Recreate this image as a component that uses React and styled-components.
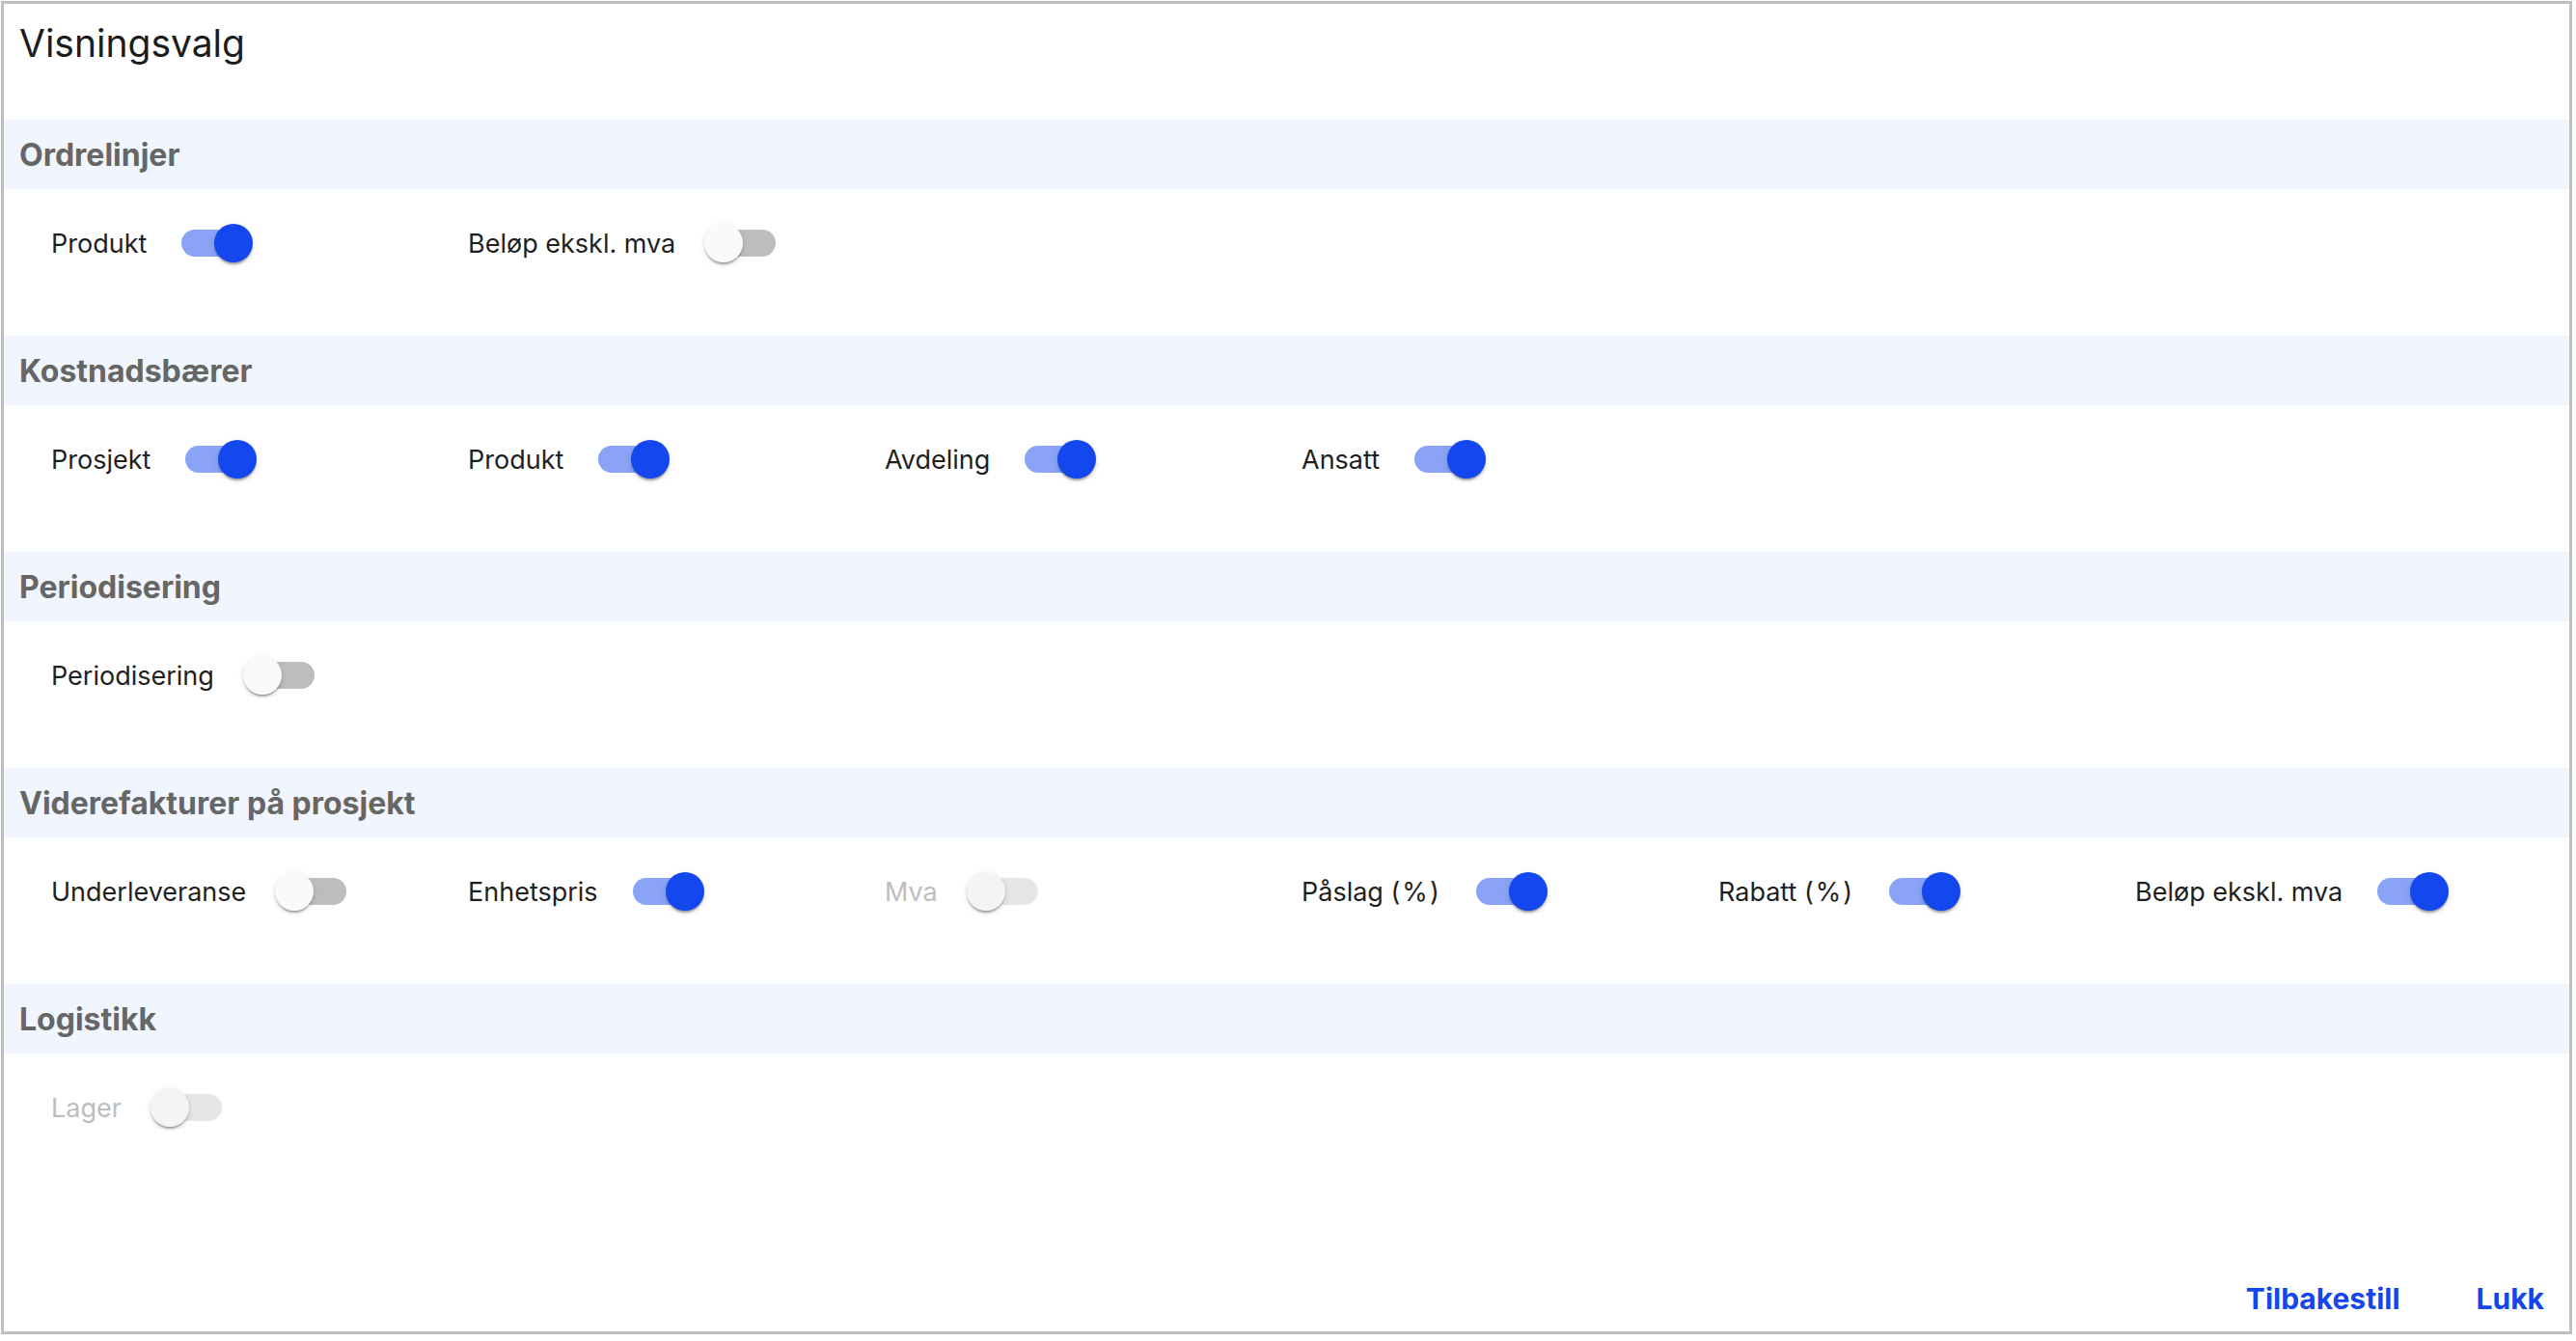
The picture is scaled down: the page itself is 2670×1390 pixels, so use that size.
import React, { useState } from "react";
import styled, { createGlobalStyle } from "styled-components";

const GlobalStyle = createGlobalStyle`
  html, body {
    margin: 0;
    padding: 0;
    background: #ffffff;
  }
  body {
    font-family: Inter, "Noto Sans", "Liberation Sans", sans-serif;
  }
`;

const Dialog = styled.div`
  width: 2665px;
  height: 1382px;
  margin: 1px 0 0 1px;
  box-sizing: border-box;
  border: 3px solid #bfbfbf;
  background: #ffffff;
  display: flex;
  flex-direction: column;
`;

const Title = styled.h2`
  margin: 0;
  height: 120px;
  box-sizing: border-box;
  padding: 18px 0 0 16px;
  font-size: 39px;
  font-weight: 400;
  line-height: 46px;
  color: #1c1c1c;
`;

const Band = styled.div`
  height: 72px;
  box-sizing: border-box;
  padding-left: 16px;
  display: flex;
  align-items: center;
  background-color: #f1f5fe;
`;

const SectionTitle = styled.h3`
  margin: 0;
  font-size: 32px;
  font-weight: 650;
  color: #666666;
`;

const Options = styled.div`
  height: ${(p) => (p.$grow ? "auto" : "152px")};
  flex: ${(p) => (p.$grow ? 1 : "none")};
  box-sizing: border-box;
  padding: 36px 0 0 49px;
  display: grid;
  grid-template-columns: repeat(6, 432px);
  align-content: start;
`;

const Option = styled.label`
  display: flex;
  align-items: center;
  height: 40px;
  cursor: ${(p) => (p.$disabled ? "default" : "pointer")};
`;

const Label = styled.span`
  font-size: 27px;
  color: ${(p) => (p.$disabled ? "#bdbdbd" : "#1f1f1f")};
  margin-right: 30px;
  white-space: nowrap;
`;

const Paren = styled.span`
  letter-spacing: 2px;
`;

const SwitchRoot = styled.span`
  position: relative;
  display: inline-block;
  width: 80px;
  height: 40px;
  flex: none;
`;

const Track = styled.span`
  position: absolute;
  left: 6px;
  right: 6px;
  top: 6px;
  height: 28px;
  border-radius: 14px;
  background-color: ${(p) =>
    p.$disabled ? "#e6e6e6" : p.$on ? "#8aa3f6" : "#bdbdbd"};
`;

const Thumb = styled.span`
  position: absolute;
  top: 0;
  left: ${(p) => (p.$on ? "40px" : "0")};
  width: 40px;
  height: 40px;
  border-radius: 50%;
  background-color: ${(p) =>
    p.$disabled ? "#f4f4f4" : p.$on ? "#1447ed" : "#fafafa"};
  box-shadow: 0 4px 2px -2px rgba(0, 0, 0, 0.2),
    0 2px 2px 0 rgba(0, 0, 0, 0.14), 0 2px 6px 0 rgba(0, 0, 0, 0.12);
  transition: left 150ms ease;
`;

const Footer = styled.div`
  height: 68px;
  display: flex;
  align-items: center;
  justify-content: flex-end;
  gap: 79px;
  padding-right: 26px;
`;

const TextButton = styled.button`
  border: none;
  background: none;
  padding: 0;
  font-family: inherit;
  font-size: 30px;
  font-weight: 700;
  color: #1446ec;
  cursor: pointer;
`;

const initialSections = [
  {
    title: "Ordrelinjer",
    options: [
      { id: "ol-produkt", label: "Produkt", on: true },
      { id: "ol-belop", label: "Beløp ekskl. mva", on: false },
    ],
  },
  {
    title: "Kostnadsbærer",
    options: [
      { id: "kb-prosjekt", label: "Prosjekt", on: true },
      { id: "kb-produkt", label: "Produkt", on: true },
      { id: "kb-avdeling", label: "Avdeling", on: true },
      { id: "kb-ansatt", label: "Ansatt", on: true },
    ],
  },
  {
    title: "Periodisering",
    options: [{ id: "pe-periodisering", label: "Periodisering", on: false }],
  },
  {
    title: "Viderefakturer på prosjekt",
    options: [
      { id: "vf-underleveranse", label: "Underleveranse", on: false },
      { id: "vf-enhetspris", label: "Enhetspris", on: true },
      { id: "vf-mva", label: "Mva", on: false, disabled: true },
      { id: "vf-paslag", label: "Påslag", unit: "(%)", on: true },
      { id: "vf-rabatt", label: "Rabatt", unit: "(%)", on: true },
      { id: "vf-belop", label: "Beløp ekskl. mva", on: true },
    ],
  },
  {
    title: "Logistikk",
    options: [{ id: "lo-lager", label: "Lager", on: false, disabled: true }],
  },
];

const defaults = () => {
  const values = {};
  initialSections.forEach((s) => s.options.forEach((o) => (values[o.id] = o.on)));
  return values;
};

const Switch = ({ on, disabled }) => (
  <SwitchRoot>
    <Track $on={on} $disabled={disabled} />
    <Thumb $on={on} $disabled={disabled} />
  </SwitchRoot>
);

const App = () => {
  const [values, setValues] = useState(defaults);

  const toggle = (option) => {
    if (option.disabled) return;
    setValues((v) => ({ ...v, [option.id]: !v[option.id] }));
  };

  return (
    <>
      <GlobalStyle />
      <Dialog>
        <Title>Visningsvalg</Title>
        {initialSections.map((section, i) => (
          <React.Fragment key={section.title}>
            <Band>
              <SectionTitle>{section.title}</SectionTitle>
            </Band>
            <Options $grow={i === initialSections.length - 1}>
              {section.options.map((option) => (
                <Option
                  key={option.id}
                  $disabled={option.disabled}
                  onClick={() => toggle(option)}
                >
                  <Label $disabled={option.disabled}>
                    {option.label}
                    {option.unit && (
                      <>
                        {" "}
                        <Paren>{option.unit}</Paren>
                      </>
                    )}
                  </Label>
                  <Switch on={values[option.id]} disabled={option.disabled} />
                </Option>
              ))}
            </Options>
          </React.Fragment>
        ))}
        <Footer>
          <TextButton onClick={() => setValues(defaults())}>Tilbakestill</TextButton>
          <TextButton>Lukk</TextButton>
        </Footer>
      </Dialog>
    </>
  );
};

export default App;
